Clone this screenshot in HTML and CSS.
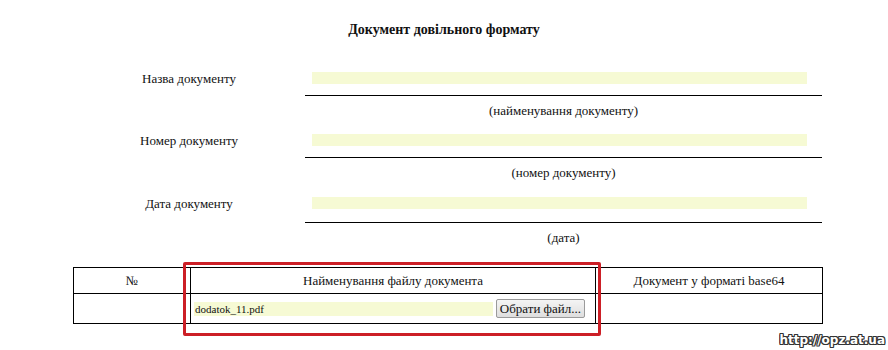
FILE: index.html
```html
<!DOCTYPE html>
<html lang="uk">
<head>
  <meta charset="UTF-8">
  <meta name="viewport" content="width=device-width, initial-scale=1.0">
  <title>Документ довільного формату</title>
  <link rel="stylesheet" href="styles.css">
</head>
<body>
  <h1 class="title">Документ довільного формату</h1>

  <div class="form">
    <div class="field">
      <div class="field-label">Назва документу</div>
      <div class="field-value"><div class="input"></div></div>
    </div>
    <div class="caption">(найменування документу)</div>

    <div class="field">
      <div class="field-label">Номер документу</div>
      <div class="field-value"><div class="input"></div></div>
    </div>
    <div class="caption">(номер документу)</div>

    <div class="field field-date">
      <div class="field-label">Дата документу</div>
      <div class="field-value"><div class="input"></div></div>
    </div>
    <div class="caption">(дата)</div>

    <div class="files">
      <table class="files-table">
        <tr>
          <th class="col-num">№</th>
          <th class="col-name">Найменування файлу документа</th>
          <th class="col-b64">Документ у форматі base64</th>
        </tr>
        <tr>
          <td></td>
          <td>
            <div class="file-input">
              <div class="file-name">dodatok_11.pdf</div>
              <button class="file-btn">Обрати файл...</button>
            </div>
          </td>
          <td></td>
        </tr>
      </table>
      <div class="highlight"></div>
    </div>
  </div>

  <div class="watermark">http://opz.at.ua</div>
</body>
</html>
```

FILE: styles.css
```css
body {
  margin: 0;
  position: relative;
  height: 350px;
  background: #fff;
  font-family: "Liberation Serif", "Times New Roman", serif;
  font-size: 13px;
  color: #111;
}

.title {
  margin: 22px 0 0;
  text-align: center;
  font-size: 14px;
  line-height: 16px;
  font-weight: bold;
}

.form {
  width: 749px;
  margin-left: 73px;
}

.field {
  display: grid;
  grid-template-columns: 232px 1fr;
  margin-top: 16px;
}

.field:first-child {
  margin-top: 34px;
}

.field-label {
  text-align: center;
  line-height: 12px;
  padding-top: 1px;
}

.field-value {
  border-bottom: 1px solid #000;
  padding: 0 15px 11px 7px;
}

.input {
  height: 12px;
  background: #f6fad4;
}

.field-date {
  margin-top: 17px;
}

.field-date .field-value {
  padding-bottom: 13px;
}

.caption {
  margin-left: 232px;
  padding-top: 7px;
  line-height: 15px;
  text-align: center;
}

.files {
  position: relative;
  margin-top: 22px;
}

.files-table {
  width: 750px;
  border-collapse: collapse;
  table-layout: fixed;
}

.files-table th,
.files-table td {
  border: 1px solid #000;
  padding: 0;
}

.files-table th {
  height: 25px;
  font-weight: normal;
  text-align: center;
}

.files-table td {
  height: 29px;
}

.col-num { width: 116px; }
.col-name { width: 404px; }

.file-input {
  display: flex;
  align-items: center;
  gap: 3px;
  padding: 0 10px 0 3px;
}

.file-name {
  flex: 1;
  height: 14px;
  line-height: 14px;
  padding-left: 1px;
  font-size: 11px;
  background: #f6fad4;
}

.file-btn {
  height: 19px;
  padding: 0 3px;
  font-family: "Liberation Serif", "Times New Roman", serif;
  font-size: 13px;
  color: #111;
  background: linear-gradient(#f4f4f4, #dedede);
  border: 1px solid #9a9a9a;
  border-radius: 2px;
}

.highlight {
  position: absolute;
  left: 110px;
  top: -5px;
  width: 418px;
  height: 74px;
  box-sizing: border-box;
  border: 3px solid #cc1f26;
  border-radius: 2px;
}

.watermark {
  position: absolute;
  right: 3px;
  top: 333px;
  font-family: "DejaVu Sans", sans-serif;
  font-size: 12px;
  font-weight: bold;
  line-height: 14px;
  color: #fff;
  text-shadow: 1px 0 #333, -1px 0 #333, 0 1px #333, 0 -1px #333, 1px 1px #333, -1px -1px #333, 1px -1px #333, -1px 1px #333;
}
```
